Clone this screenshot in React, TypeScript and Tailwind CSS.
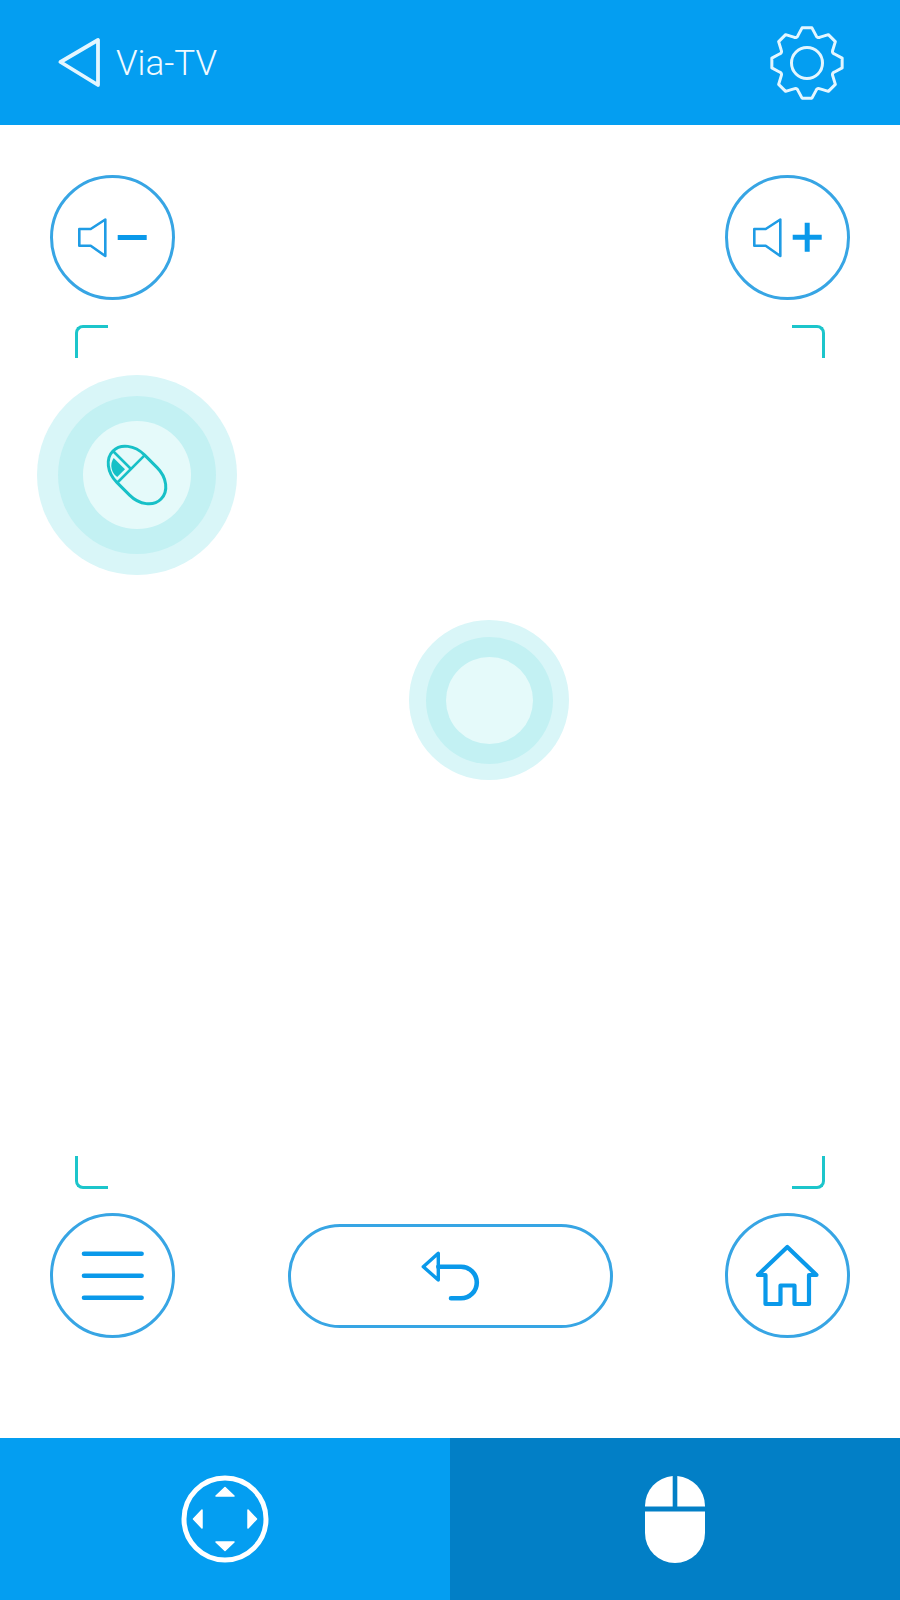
const blue = "#0a99ea";
const teal = "#17c0c7";

// 8 tooth gear outline, centred on 0,0
const gearPath = Array.from({ length: 8 }, (_, i) => {
  const a = (i * Math.PI) / 4 - Math.PI / 2;
  const pt = (r: number, d: number) => {
    const t = a + (d * Math.PI) / 180;
    return `${(r * Math.cos(t)).toFixed(2)} ${(r * Math.sin(t)).toFixed(2)}`;
  };
  const start = i === 0 ? `M${pt(29, -18)}` : "";
  return `${start} L${pt(35.5, -8)} L${pt(35.5, 8)} L${pt(29, 18)} Q${pt(26.5, 22.5)} ${pt(29, 27)}`;
}).join(" ") + " Z";

const Speaker = () => (
  <path
    d="M29.3 54 H40.7 L55.3 44.5 V81 L40.7 70.7 H29.3 Z"
    fill="none"
    stroke="#1f9ce5"
    strokeWidth="2.6"
    strokeLinejoin="round"
  />
);

const RoundButton: React.FC<{ children: React.ReactNode }> = ({ children }) => (
  <div className="w-[125px] h-[125px] shrink-0 rounded-full border-[3px] border-[#37a5e4] flex items-center justify-center bg-white">
    <svg viewBox="0 0 125 125" className="w-[125px] h-[125px] shrink-0">
      {children}
    </svg>
  </div>
);

const Ripple: React.FC<{
  className: string;
  midClass: string;
  innerClass: string;
  children?: React.ReactNode;
}> = ({ className, midClass, innerClass, children }) => (
  <div className={`absolute rounded-full bg-[#d9f6f8] flex items-center justify-center ${className}`}>
    <div className={`rounded-full bg-[#c3f1f3] flex items-center justify-center ${midClass}`}>
      <div className={`rounded-full bg-[#e5fafa] flex items-center justify-center ${innerClass}`}>
        {children}
      </div>
    </div>
  </div>
);

const App = () => {
  return (
    <div className="w-[900px] h-[1600px] bg-white flex flex-col font-['Roboto',sans-serif] overflow-hidden">
      <header className="h-[125px] shrink-0 bg-[#049ef1] flex items-center justify-between pl-[58px] pr-[55px]">
        <div className="flex items-center gap-4">
          <svg viewBox="0 0 42 49" className="w-[42px] h-[49px]">
            <path
              d="M2.5 24 L40 2 V47 Z"
              fill="none"
              stroke="#e3f6ff"
              strokeWidth="3.8"
              strokeLinejoin="round"
            />
          </svg>
          <span className="text-[35px] font-light text-[#f0faff] pt-[3px]">Via-TV</span>
        </div>
        <svg viewBox="-38 -38 76 76" className="w-[76px] h-[76px]">
          <path d={gearPath} fill="none" stroke="#e3f6ff" strokeWidth="3" strokeLinejoin="round" />
          <circle r="15.5" fill="none" stroke="#e3f6ff" strokeWidth="3" />
        </svg>
      </header>

      <div className="flex justify-between px-[50px] pt-[50px]">
        <RoundButton>
          <Speaker />
          <path d="M67.7 62.5 H96.7" stroke={blue} strokeWidth="5" />
        </RoundButton>
        <RoundButton>
          <Speaker />
          <path d="M67.7 62.2 H96.7 M82.2 47.7 V76.7" stroke={blue} strokeWidth="5" />
        </RoundButton>
      </div>

      {/* touch pad */}
      <div className="relative mt-[25px] mx-[75px] h-[865px] flex flex-col justify-between">
        <div className="flex justify-between">
          <div className="w-[33px] h-[33px] border-t-[3px] border-l-[3px] border-[#1cc5cb] rounded-tl-[8px]" />
          <div className="w-[33px] h-[33px] border-t-[3px] border-r-[3px] border-[#1cc5cb] rounded-tr-[8px]" />
        </div>
        <div className="flex justify-between">
          <div className="w-[33px] h-[33px] border-b-[3px] border-l-[3px] border-[#1cc5cb] rounded-bl-[8px]" />
          <div className="w-[33px] h-[33px] border-b-[3px] border-r-[3px] border-[#1cc5cb] rounded-br-[8px]" />
        </div>

        <Ripple
          className="w-[200px] h-[200px] left-[-38px] top-[50px]"
          midClass="w-[158px] h-[158px]"
          innerClass="w-[108px] h-[108px]"
        >
          <svg viewBox="-33 -33 66 66" className="w-[66px] h-[66px]">
            <g transform="rotate(-45)" fill="none" stroke={teal} strokeWidth="3">
              <rect x="-19.5" y="-34" width="39" height="68" rx="19.5" ry="25" />
              <path d="M0 -34 V-8.5 M-19.5 -8.5 H19.5" strokeWidth="2.6" />
              <path d="M-4.5 -28.5 V-12.5 H-15.5 A14 14 0 0 1 -4.5 -28.5 Z" fill={teal} stroke="none" />
            </g>
          </svg>
        </Ripple>
        <Ripple
          className="w-[160px] h-[160px] left-[334px] top-[295px]"
          midClass="w-[127px] h-[127px]"
          innerClass="w-[87px] h-[87px]"
        />
      </div>

      <div className="flex justify-between items-center px-[50px] mt-[24px]">
        <RoundButton>
          <path
            d="M34 40.7 H91.6 M34 62.7 H91.6 M34 84.7 H91.6"
            stroke={blue}
            strokeWidth="4.6"
            strokeLinecap="round"
          />
        </RoundButton>
        <div className="w-[325px] h-[104px] rounded-full border-[3px] border-[#37a5e4] flex items-center justify-center">
          <svg viewBox="0 0 325 104" className="w-[325px] h-[104px] shrink-0">
            <g fill="none" stroke={blue} strokeLinejoin="round" strokeLinecap="round">
              <path d="M135.3 42.7 L150.3 29.3 V56 Z" strokeWidth="3.4" />
              <path d="M150.3 42.7 H173 A15.8 15.8 0 0 1 173 74.3 H163" strokeWidth="4.6" />
            </g>
          </svg>
        </div>
        <RoundButton>
          <path
            d="M62.3 34 L33 62 H40.5 V91 H55.5 V72.5 H69.5 V91 H84 V62 H91.5 Z"
            fill="none"
            stroke={blue}
            strokeWidth="4.2"
            strokeLinejoin="round"
          />
        </RoundButton>
      </div>

      <footer className="mt-[100px] h-[162px] shrink-0 flex">
        <div className="w-1/2 bg-[#049ef1] flex items-center justify-center">
          <svg viewBox="-44 -44 88 88" className="w-[88px] h-[88px]">
            <circle r="41" fill="none" stroke="white" strokeWidth="5" />
            {[0, 90, 180, 270].map((deg) => (
              <path
                key={deg}
                d="M0 -31.5 L9 -23 H-9 Z"
                fill="white"
                stroke="white"
                strokeWidth="1.5"
                strokeLinejoin="round"
                transform={`rotate(${deg})`}
              />
            ))}
          </svg>
        </div>
        <div className="w-1/2 bg-[#027fc6] flex items-center justify-center">
          <svg viewBox="0 0 60 87" className="w-[60px] h-[87px]">
            <path d="M27.7 0.1 V30.5 H0 V30 A30 30 0 0 1 27.7 0.1 Z" fill="white" />
            <path d="M32.3 0.1 A30 30 0 0 1 60 30 V30.5 H32.3 Z" fill="white" />
            <path d="M0 35.5 H60 V57 A30 30 0 0 1 0 57 Z" fill="white" />
          </svg>
        </div>
      </footer>
    </div>
  );
};

export default App;
